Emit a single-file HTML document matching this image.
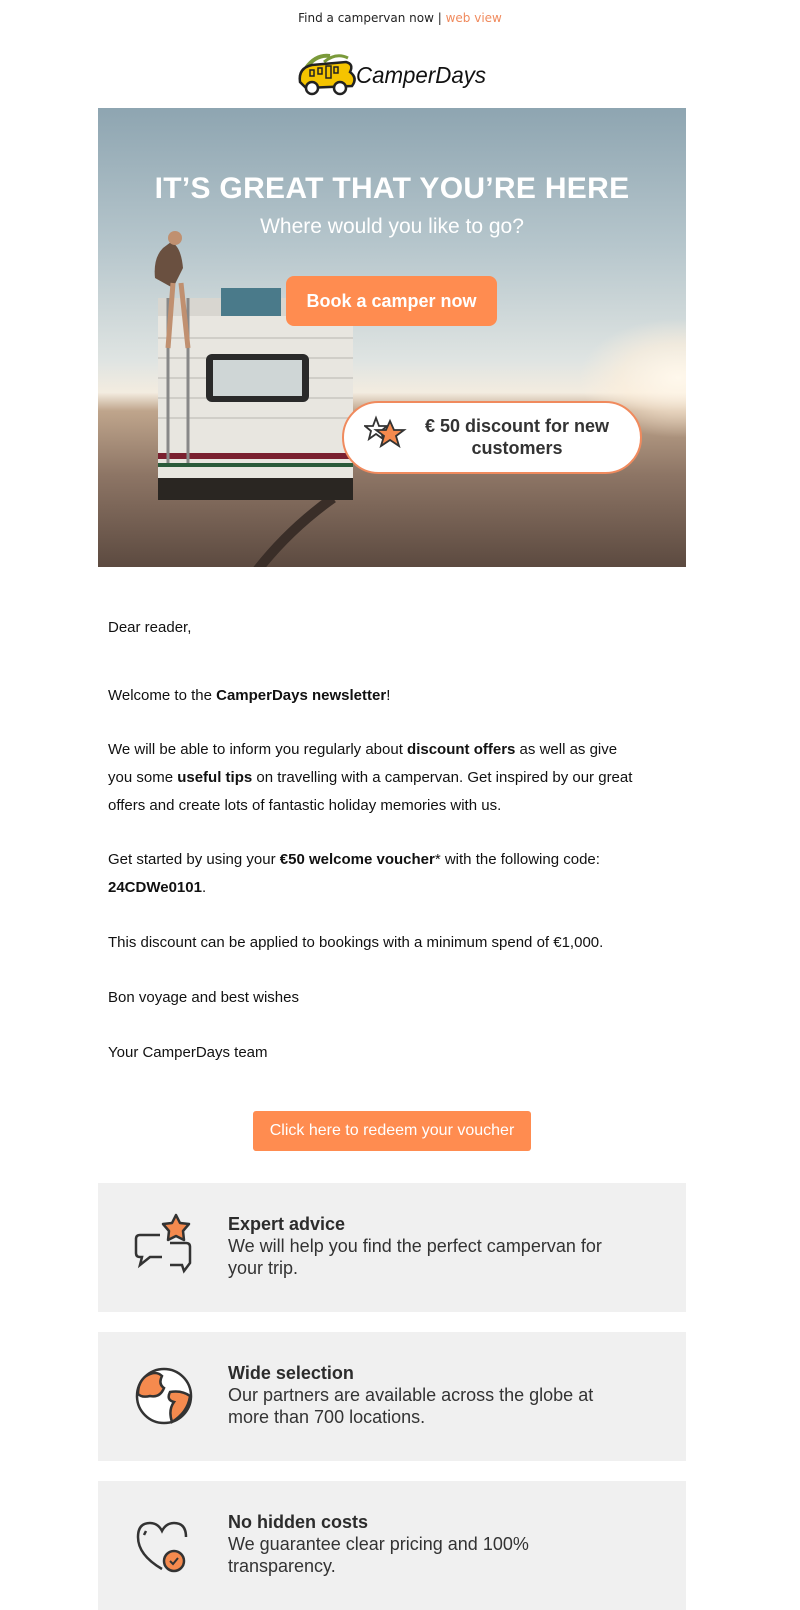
<!DOCTYPE html>
<html><head><meta charset="utf-8"><style>
body{margin:0;background:#fff;font-family:"Liberation Sans",Arial,sans-serif;width:800px;height:1600px;overflow:hidden;position:relative}
.abs{position:absolute}
.top{top:11px;left:0;width:800px;text-align:center;font-family:"DejaVu Sans",sans-serif;font-size:12px;color:#222}
.top span{color:#f08a5d}
.hero{left:98px;top:108px;width:588px;height:459px;overflow:hidden;background:linear-gradient(180deg,#8ea5b1 0%,#b6c6cc 30%,#dfe4e2 55%,#f3ece0 62%,#bfa58c 66%,#8d7565 80%,#5c4a40 100%)}
.sun{left:480px;top:210px;width:200px;height:120px;border-radius:50%;background:radial-gradient(#fff8ec 0%,rgba(255,240,220,.6) 40%,rgba(255,255,255,0) 70%)}
.h1{left:0;width:588px;top:64px;text-align:center;color:#fff;font-weight:bold;font-size:30px;letter-spacing:.3px}
.h2{left:0;width:588px;top:107px;text-align:center;color:#fff;font-size:21px}
.btn1{left:188px;top:168px;width:211px;height:50px;background:#ff8c50;border-radius:8px;color:#fff;font-weight:bold;font-size:18px;line-height:50px;text-align:center}
.disc{left:244px;top:293px;width:300px;height:73px;background:#fff;border:2px solid #f08a5d;border-radius:37px;box-sizing:border-box}
.disc div{position:absolute;left:68px;top:12px;width:210px;text-align:center;font-weight:bold;font-size:18px;color:#333;line-height:22px}
.txt{left:108px;width:530px;font-size:15px;color:#111;line-height:28px}
.cta{left:253px;top:1111px;width:278px;height:40px;background:#ff8c50;border-radius:3px;color:#fff;font-size:16px;line-height:40px;text-align:center}
.box{left:98px;width:588px;height:129px;background:#f0f0f0}
.box .t{position:absolute;left:130px;top:30px;font-size:18px;color:#333;line-height:22px;width:395px}
.box .t b{color:#2c2c2c}
.box svg{position:absolute;left:34px;top:30px}
</style></head><body>
<div class="abs top">Find a campervan now | <span>web view</span></div>
<svg class="abs" style="left:296px;top:50px" width="194" height="46" viewBox="0 0 194 46">
<path d="M10 18 Q20 4 34 6" stroke="#7a9a3a" stroke-width="4" fill="none"/>
<path d="M28 12 Q40 2 52 8" stroke="#7a9a3a" stroke-width="3" fill="none"/>
<path d="M4 32 Q2 18 16 15 L50 12 Q58 14 54 22 Q62 28 56 36 L10 38 Z" fill="#f5c400" stroke="#222" stroke-width="2.5"/>
<rect x="14" y="20" width="4" height="6" fill="none" stroke="#222" stroke-width="1.5"/><rect x="22" y="18" width="4" height="6" fill="none" stroke="#222" stroke-width="1.5"/><rect x="30" y="16" width="5" height="12" fill="none" stroke="#222" stroke-width="1.5"/><rect x="38" y="17" width="4" height="6" fill="none" stroke="#222" stroke-width="1.5"/>
<circle cx="16" cy="38" r="6" fill="#fff" stroke="#222" stroke-width="2.5"/><circle cx="44" cy="38" r="6" fill="#fff" stroke="#222" stroke-width="2.5"/>
<text x="60" y="33" font-family="Liberation Sans,sans-serif" font-size="23" font-style="italic" fill="#111" textLength="130" lengthAdjust="spacingAndGlyphs">CamperDays</text>
</svg>
<div class="abs hero">
<div class="abs sun"></div>
<svg class="abs" style="left:45px;top:120px" width="220" height="340" viewBox="0 0 220 340">
<path d="M80 395 Q120 320 190 270" stroke="#3a2e28" stroke-width="10" fill="none"/>
<rect x="15" y="70" width="195" height="200" rx="6" fill="#e8e6e0"/>
<rect x="15" y="70" width="195" height="18" fill="#d8d6d0"/>
<g stroke="#c8c6c0" stroke-width="1.5"><line x1="15" y1="110" x2="210" y2="110"/><line x1="15" y1="130" x2="210" y2="130"/><line x1="15" y1="150" x2="210" y2="150"/><line x1="15" y1="170" x2="210" y2="170"/><line x1="15" y1="190" x2="210" y2="190"/></g>
<rect x="63" y="126" width="103" height="48" rx="6" fill="#2a2a2a"/><rect x="70" y="132" width="89" height="36" fill="#cfd6d6"/>
<rect x="15" y="225" width="195" height="6" fill="#7a2030"/><rect x="15" y="235" width="195" height="4" fill="#2a5a3a"/>
<rect x="15" y="250" width="195" height="22" fill="#2a2622"/>
<rect x="78" y="60" width="60" height="28" fill="#4a7a8a"/>
<line x1="25" y1="70" x2="25" y2="235" stroke="#888" stroke-width="3"/><line x1="45" y1="70" x2="45" y2="235" stroke="#888" stroke-width="3"/>
<path d="M20 20 Q10 30 12 50 L30 60 L40 40 Q38 18 28 14 Z" fill="#6a5040"/>
<circle cx="32" cy="10" r="7" fill="#c09070"/>
<path d="M30 55 L25 120 M38 55 L45 120" stroke="#c09070" stroke-width="5"/>
</svg>
<div class="abs h1">IT’S GREAT THAT YOU’RE HERE</div>
<div class="abs h2">Where would you like to go?</div>
<div class="abs btn1">Book a camper now</div>
<div class="abs disc">
<svg style="position:absolute;left:20px;top:12px" width="44" height="36" viewBox="0 0 44 36"><path d="M12 3 L15 11 L23 11 L17 16 L19 24 L12 19 L5 24 L7 16 L1 11 L9 11 Z" fill="none" stroke="#333" stroke-width="1.8"/><path d="M26 6 L30 15 L40 15 L32 21 L35 31 L26 25 L17 31 L20 21 L12 15 L22 15 Z" fill="#f58a4e" stroke="#333" stroke-width="1.8"/></svg>
<div>€ 50 discount for new customers</div></div>
</div>
<div class="abs txt" style="top:614px">Dear reader,</div>
<div class="abs txt" style="top:682px">Welcome to the <b>CamperDays newsletter</b>!</div>
<div class="abs txt" style="top:736px">We will be able to inform you regularly about <b>discount offers</b> as well as give you some <b>useful tips</b> on travelling with a campervan. Get inspired by our great offers and create lots of fantastic holiday memories with us.</div>
<div class="abs txt" style="top:846px">Get started by using your <b>€50 welcome voucher</b>* with the following code: <b>24CDWe0101</b>.</div>
<div class="abs txt" style="top:929px;width:600px">This discount can be applied to bookings with a minimum spend of €1,000.</div>
<div class="abs txt" style="top:984px">Bon voyage and best wishes</div>
<div class="abs txt" style="top:1039px">Your CamperDays team</div>
<div class="abs cta">Click here to redeem your voucher</div>
<div class="abs box" style="top:1183px">
<svg width="64" height="64" viewBox="0 0 64 64"><path d="M28 22 H8 Q4 22 4 26 V40 Q4 44 8 44 H10 L8 52 L18 44 H30" fill="none" stroke="#333" stroke-width="2.5"/><path d="M38 30 H54 Q58 30 58 34 V50 L52 58 L50 52 H38" fill="none" stroke="#333" stroke-width="2.5"/><path d="M44 2 L48 10 L57 11 L51 18 L52 27 L44 23 L36 27 L37 18 L31 11 L40 10 Z" fill="#f58a4e" stroke="#333" stroke-width="2.5" stroke-linejoin="round"/></svg>
<div class="t"><b>Expert advice</b><br>We will help you find the perfect campervan for your trip.</div></div>
<div class="abs box" style="top:1332px">
<svg width="64" height="64" viewBox="0 0 64 64"><circle cx="32" cy="34" r="27" fill="#fff" stroke="#333" stroke-width="2.5"/><path d="M14 14 Q24 8 30 14 Q26 22 32 26 Q28 36 18 34 Q10 36 6 32 Q6 20 14 14Z" fill="#f58a4e" stroke="#333" stroke-width="2.5"/><path d="M38 30 Q50 28 58 34 Q56 50 40 60 Q36 48 42 40 Q34 38 38 30Z" fill="#f58a4e" stroke="#333" stroke-width="2.5"/></svg>
<div class="t"><b>Wide selection</b><br>Our partners are available across the globe at more than 700 locations.</div></div>
<div class="abs box" style="top:1481px">
<svg width="64" height="64" viewBox="0 0 64 64"><path d="M30 58 Q6 44 6 26 Q6 12 18 12 Q26 12 30 20 Q34 12 42 12 Q54 12 54 26" fill="none" stroke="#333" stroke-width="2.5"/><path d="M12 24 L14 20" stroke="#333" stroke-width="2.5"/><circle cx="42" cy="50" r="10" fill="#f58a4e" stroke="#333" stroke-width="2.5"/><path d="M38 50 L41 53 L46 47" fill="none" stroke="#333" stroke-width="2"/></svg>
<div class="t"><b>No hidden costs</b><br>We guarantee clear pricing and 100% transparency.</div></div>
</body></html>
